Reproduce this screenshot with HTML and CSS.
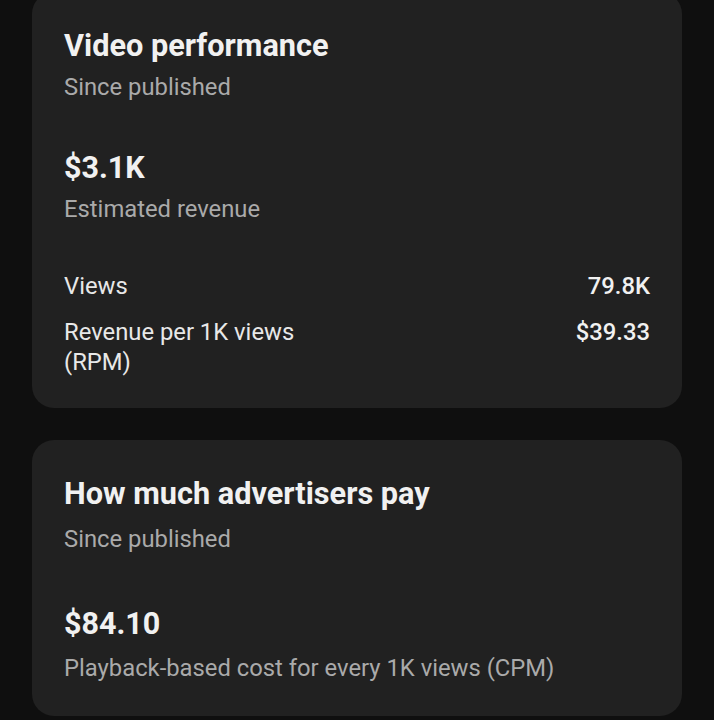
FILE: index.html
```html
<!DOCTYPE html>
<html>
<head>
<meta charset="utf-8">
<link rel="stylesheet" href="styles.css">
</head>
<body>
<main class="page">
  <section class="card card-first">
    <h2 class="title">Video performance</h2>
    <p class="sub">Since published</p>
    <p class="big">$3.1K</p>
    <p class="caption">Estimated revenue</p>
    <div class="rows">
      <div class="row">
        <span class="label">Views</span>
        <span class="value">79.8K</span>
      </div>
      <div class="row">
        <span class="label">Revenue per 1K views<br>(RPM)</span>
        <span class="value">$39.33</span>
      </div>
    </div>
  </section>
  <section class="card card-second">
    <h2 class="title">How much advertisers pay</h2>
    <p class="sub sub-2">Since published</p>
    <p class="big big-2">$84.10</p>
    <p class="caption caption-2">Playback-based cost for every 1K views (CPM)</p>
  </section>
</main>
</body>
</html>
```

FILE: styles.css
```css
html, body {
  margin: 0;
  padding: 0;
  background: #0f0f0f;
  height: 720px;
  overflow: hidden;
}
body {
  font-family: Roboto, "Noto Sans", sans-serif;
  color: #f1f1f1;
}
.page {
  display: flex;
  flex-direction: column;
  gap: 32px;
  padding: 0 32px;
}
.card {
  background: #212121;
  border-radius: 22px;
  padding: 36px 32px 31px 32px;
}
.card-first {
  margin-top: -8px;
}
.card-second {
  padding-bottom: 33px;
}
.title {
  margin: 0;
  font-size: 30.7px;
  line-height: 36px;
  font-weight: 700;
  color: #f1f1f1;
}
.sub {
  margin: 8px 0 0;
  font-size: 23.8px;
  line-height: 30px;
  color: #aaaaaa;
}
.sub-2 { margin-top: 12px; }
.big {
  margin: 48px 0 0;
  font-size: 30.5px;
  line-height: 36px;
  font-weight: 700;
  color: #f1f1f1;
}
.big-2 { margin-top: 52px; }
.caption {
  margin: 8px 0 0;
  font-size: 23.8px;
  line-height: 30px;
  color: #aaaaaa;
}
.caption-2 { margin-top: 11px; }
.rows {
  margin-top: 47px;
  display: flex;
  flex-direction: column;
  gap: 16px;
}
.row {
  display: flex;
  justify-content: space-between;
  align-items: flex-start;
  font-size: 23.8px;
  line-height: 30px;
  color: #e8e8e8;
}
.value {
  font-weight: 500;
  color: #f1f1f1;
}
```
